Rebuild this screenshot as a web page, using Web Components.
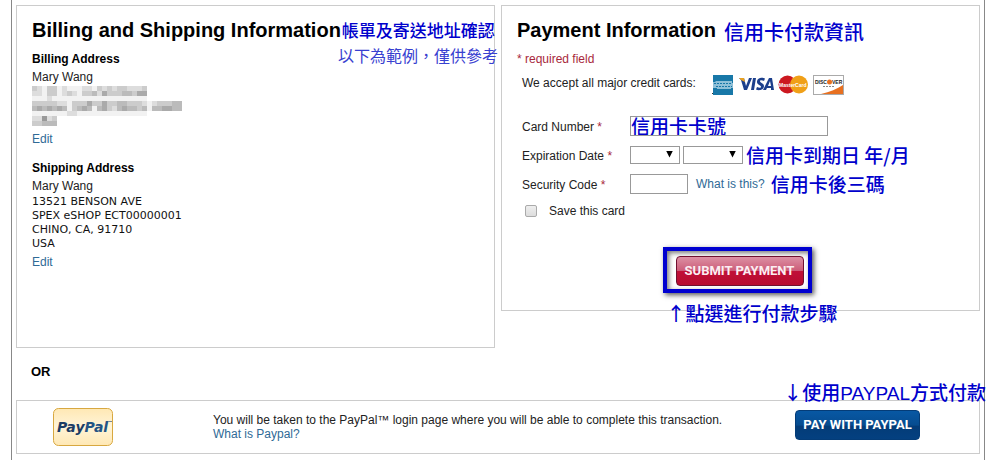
<!DOCTYPE html>
<html lang="en">
<head>
<meta charset="utf-8">
<title>Checkout</title>
<style>
  body {
    margin: 0;
    background: #fff;
    color: #222;
    font: 12px/14px "Liberation Sans", "Noto Sans CJK TC", sans-serif;
  }
</style>
</head>
<body>
<checkout-page></checkout-page>

<script>
const define = (name, html, setup) => {
  customElements.define(name, class extends HTMLElement {
    constructor() {
      super();
      this.attachShadow({ mode: "open" });
    }

    connectedCallback() {
      this.shadowRoot.innerHTML = html;
      if (setup) setup(this, this.shadowRoot);
    }
  });
};

// Blue guide remark next to a field or a button
define("guide-note", `
  <style>
    :host {
      display: inline-block;
      color: #0000cc;
      font: 500 19px/20px "Noto Sans CJK TC", sans-serif;
      white-space: nowrap;
    }
    :host([size="small"]) { font-size: 16px; font-weight: 400; color: #3840d0; }
    :host([size="medium"]) { font-size: 17px; }
    :host([size="large"]) { font-size: 20px; }
  </style>
  <slot></slot>
`);

define("info-panel", `
  <style>
    :host {
      display: block;
      position: relative;
      border: 1px solid #ccc;
      padding: 12px 15px 17px;
    }
    header {
      display: flex;
      align-items: center;
      margin-bottom: 7px;
      white-space: nowrap;
    }
    h1 {
      margin: 0;
      color: #000;
      font-size: 20px;
      line-height: 24px;
    }
  </style>
  <header><h1></h1><slot name="note"></slot></header>
  <slot></slot>
`, (host, root) => {
  root.querySelector("h1").textContent = host.getAttribute("heading");
});

define("text-link", `
  <style>
    :host { display: inline-block; }
    a { color: #2f6a96; text-decoration: none; }
    a:hover { text-decoration: underline; }
  </style>
  <a href="#"><slot></slot></a>
`);

// Pixelated block that hides the private address lines, one hex digit per cell
define("address-mosaic", `
  <style>
    :host { display: block; }
    svg { display: block; }
  </style>
  <svg width="165" height="42" shape-rendering="crispEdges" aria-hidden="true"></svg>
`, (host, root) => {
  const rows = [
    "cdeccedeeeddecdcdccdddc",
    "ddeccedcdeccbdacccbbcaa",
    "eeedeeeeeeeeeeeeeeeeeee",
    "cccccddecccaccaccbbcccdedcccbb",
    "babababecbabebacdbabbcbebbaabb",
    "eeeeeeeddeeeeeeeeeeeeee",
    "dd9dc",
    "ccbbb",
  ];
  root.querySelector("svg").innerHTML = rows.map((row, r) =>
    [...row].map((c, i) => {
      const fill = c === "e" ? "#f2f2f2" : `#${c}${c}${c}`;
      return `<rect x="${i * 5}" y="${r * 5}" width="5" height="5" fill="${fill}"/>`;
    }).join("")
  ).join("");
});

define("address-block", `
  <style>
    :host { display: block; }
    h2 { margin: 0; color: #000; font-size: 12px; line-height: 20px; }
    .name { line-height: 17px; }
    ::slotted(address) {
      color: #111;
      font: 11px/14px "DejaVu Sans", sans-serif;
    }
    text-link { display: block; line-height: 22px; }
  </style>
  <h2></h2>
  <div class="name"></div>
  <slot></slot>
  <text-link>Edit</text-link>
`, (host, root) => {
  root.querySelector("h2").textContent = host.getAttribute("heading");
  root.querySelector(".name").textContent = host.getAttribute("name");
});

define("card-logos", `
  <style>
    :host { display: block; }
    svg { display: block; }
    text { font-family: "Liberation Sans", sans-serif; font-weight: bold; }
  </style>
  <svg width="132" height="20" viewBox="0 0 132 20" role="img" aria-label="Accepted cards">
    <rect x="1" width="20" height="20" fill="#1878a8"/>
    <path d="M1 9V7h2l1-1h16v2h1v5h-2v1H5v-1H1z" fill="#8fc0d8"/>
    <path d="M2 8.500h18M4 11.500h16" stroke="#1878a8" stroke-dasharray="2 1"/>
    <rect y="18" width="1" height="1" fill="#333"/>
    <path d="M27 3h5l2 8 3-8h3l-5 12h-3L29 5z" fill="#1c3f8c"/>
    <path d="M27 3h5l1 4-4-2z" fill="#e8a020"/>
    <path d="M41 3h3l-2 12h-3zM53 3.500l-1 2.500c-2-1-4-1-4 0 0 2 4 2 4 5 0 4-5 5-8 3.500l1-2.500c2 1 4 1 4 0 0-2-4-2-4-5 0-4 5-5 8-3.500zM57 3h3l2 12h-3v-2h-4l-1 2h-3zM58 6l-2 5h3z" fill="#1c3f8c"/>
    <circle cx="75.500" cy="9.500" r="9" fill="#cc1820"/>
    <circle cx="87" cy="9.500" r="9" fill="#f0a018"/>
    <text x="67" y="12" font-size="5" fill="#fff">MasterCard</text>
    <rect x="101.500" y=".5" width="30" height="19" fill="#fff" stroke="#aaa"/>
    <path d="M131 10v9h-22c9-2 16-5 22-9z" fill="#e87020"/>
    <text x="103" y="9" font-size="5" fill="#222">DISC</text>
    <circle cx="117.500" cy="7" r="2.500" fill="#e87020"/>
    <text x="120" y="9" font-size="5" fill="#222">VER</text>
    <path d="M111 11.500h11" stroke="#888" stroke-dasharray="2 1"/>
  </svg>
`);

define("form-row", `
  <style>
    :host {
      display: grid;
      grid-template-columns: 105px 1fr;
      column-gap: 3px;
      align-items: center;
      height: 29px;
    }
    .label { padding-top: 3px; }
    .controls { display: flex; align-items: center; white-space: nowrap; }
  </style>
  <div class="label"><slot name="label"></slot></div>
  <div class="controls"><slot></slot></div>
`);

define("payment-form", `
  <style>
    :host { display: block; }
    .mark { color: #a8283c; }
    .required { line-height: 20px; }
    form { padding: 0 12px 0 5px; }
    .accept { display: flex; align-items: center; gap: 16px; height: 28px; margin-bottom: 14px; }
    .accept card-logos { margin-top: 4px; }
    input, select {
      box-sizing: border-box;
      margin: 0;
      border: 1px solid #999;
      border-radius: 0;
      background: #fff;
      padding: 0;
      font: inherit;
    }
    #number {
      width: 198px;
      height: 20px;
      color: #0000cc;
      font: 500 19px/18px "Noto Sans CJK TC", sans-serif;
    }
    #code { width: 58px; height: 20px; margin-right: 8px; }
    .drop { position: relative; display: flex; margin-right: 3px; }
    .drop::after {
      content: "";
      position: absolute;
      top: 5px;
      right: 7px;
      width: 7px;
      height: 7px;
      background: #000;
      clip-path: polygon(0 0, 100% 0, 50% 100%);
      pointer-events: none;
    }
    select { appearance: none; height: 18px; }
    #month { width: 50px; }
    #year { width: 60px; }
    .link-note { margin-left: 6px; }
    .save { display: flex; align-items: center; gap: 12px; height: 26px; padding-left: 3px; }
    #save {
      appearance: none;
      width: 12px;
      height: 12px;
      border-color: #aaa;
      border-radius: 2px;
      background: linear-gradient(#eee, #ddd);
    }
    .submit {
      position: relative;
      box-sizing: border-box;
      width: 149px;
      margin: 23px auto 0;
      border: 4px solid #0000d0;
      padding: 5px 4px 3px 9px;
      box-shadow: 2px 2px 5px #555, inset 2px 2px 5px #777;
    }
    .submit guide-note { position: absolute; top: calc(100% + 14px); left: 0; }
  </style>
  <div class="required mark">* required field</div>
  <form>
    <div class="accept">We accept all major credit cards: <card-logos></card-logos></div>
    <form-row>
      <label slot="label" for="number">Card Number <span class="mark">*</span></label>
      <input id="number" type="text" value="信用卡卡號">
    </form-row>
    <form-row>
      <label slot="label" for="month">Expiration Date <span class="mark">*</span></label>
      <span class="drop"><select id="month"><option></option></select></span>
      <span class="drop"><select id="year" aria-label="Expiration year"><option></option></select></span>
      <guide-note>信用卡到期日 年/月</guide-note>
    </form-row>
    <form-row>
      <label slot="label" for="code">Security Code <span class="mark">*</span></label>
      <input id="code" type="text">
      <text-link>What is this?</text-link>
      <guide-note class="link-note">信用卡後三碼</guide-note>
    </form-row>
    <div class="save"><input id="save" type="checkbox"><label for="save">Save this card</label></div>
    <div class="submit">
      <pay-button kind="card">SUBMIT PAYMENT</pay-button>
      <guide-note>↑點選進行付款步驟</guide-note>
    </div>
  </form>
`);

define("pay-button", `
  <style>
    :host { display: block; }
    button {
      display: block;
      box-sizing: border-box;
      width: 100%;
      height: 30px;
      border: 1px solid #043c78;
      border-radius: 4px;
      padding: 0;
      background: linear-gradient(#0858a4, #064c90 50%, #043c78 55%, #044080);
      color: #fff;
      font: bold 13px/28px Roboto, sans-serif;
      white-space: nowrap;
    }
    :host([kind="card"]) button {
      border-color: #701030;
      background: linear-gradient(#dc90a4, #cc5c78 49%, #c01038 50%, #b80c30);
      color: #fceef2;
    }
  </style>
  <button type="button"><slot></slot></button>
`);

define("paypal-row", `
  <style>
    :host {
      display: flex;
      position: relative;
      align-items: center;
      border: 1px solid #ccc;
      padding: 7px 59px 7px 36px;
    }
    svg { flex: none; margin-right: 100px; }
    svg text { font: italic bold 14px "DejaVu Sans", sans-serif; }
    .text { flex: 1; }
    pay-button { width: 125px; padding-bottom: 4px; }
    guide-note { position: absolute; top: -19px; right: -7px; }
    .latin { font-family: "Liberation Sans", sans-serif; font-weight: 400; }
  </style>
  <svg width="60" height="38" viewBox="0 0 60 38" role="img" aria-label="PayPal">
    <defs><linearGradient id="g" x2="0" y2="1"><stop stop-color="#ffe8b4"/><stop offset=".5" stop-color="#fff4d8"/><stop offset="1" stop-color="#ffe8b4"/></linearGradient></defs>
    <rect x=".5" y=".5" width="59" height="37" rx="5" fill="url(#g)" stroke="#d8a840"/>
    <text x="4" y="24" fill="#1c3c64">Pay<tspan fill="#245484">Pal</tspan></text>
    <path d="M55 13.500h4" stroke="#789"/>
  </svg>
  <div class="text">
    You will be taken to the PayPal™ login page where you will be able to complete this transaction.<br>
    <text-link>What is Paypal?</text-link>
  </div>
  <pay-button>PAY WITH PAYPAL</pay-button>
  <guide-note>↓使用<span class="latin">PAYPAL</span>方式付款</guide-note>
`);

define("checkout-page", `
  <style>
    :host { display: block; }
    main {
      box-sizing: border-box;
      min-height: 100vh;
      margin: 0 8px 0 11px;
      border: solid #888;
      border-width: 0 1px;
      padding: 5px 4px;
    }
    .panels {
      display: grid;
      grid-template-columns: repeat(2, minmax(0, 1fr));
      gap: 6px;
      align-items: start;
    }
    .billing { padding-bottom: 74px; }
    .billing [size="medium"] { margin-left: 1px; }
    .example { position: absolute; top: 39px; right: -4px; }
    .payment [size="large"] { margin-left: 8px; padding-top: 4px; }
    address-block + address-block { margin-top: 8px; }
    .or { margin: 0; padding: 14px 15px 18px; color: #000; font-size: 13px; line-height: 20px; }
  </style>
  <main>
    <div class="panels">
      <info-panel class="billing" heading="Billing and Shipping Information">
        <guide-note slot="note" size="medium">帳單及寄送地址確認</guide-note>
        <guide-note class="example" size="small">以下為範例，僅供參考</guide-note>
        <address-block heading="Billing Address" name="Mary Wang">
          <address-mosaic></address-mosaic>
        </address-block>
        <address-block heading="Shipping Address" name="Mary Wang">
          <address>13521 BENSON AVE<br>SPEX eSHOP ECT00000001<br>CHINO, CA, 91710<br>USA</address>
        </address-block>
      </info-panel>
      <info-panel class="payment" heading="Payment Information">
        <guide-note slot="note" size="large">信用卡付款資訊</guide-note>
        <payment-form></payment-form>
      </info-panel>
    </div>
    <h2 class="or">OR</h2>
    <paypal-row></paypal-row>
  </main>
`);
</script>
</body>
</html>
